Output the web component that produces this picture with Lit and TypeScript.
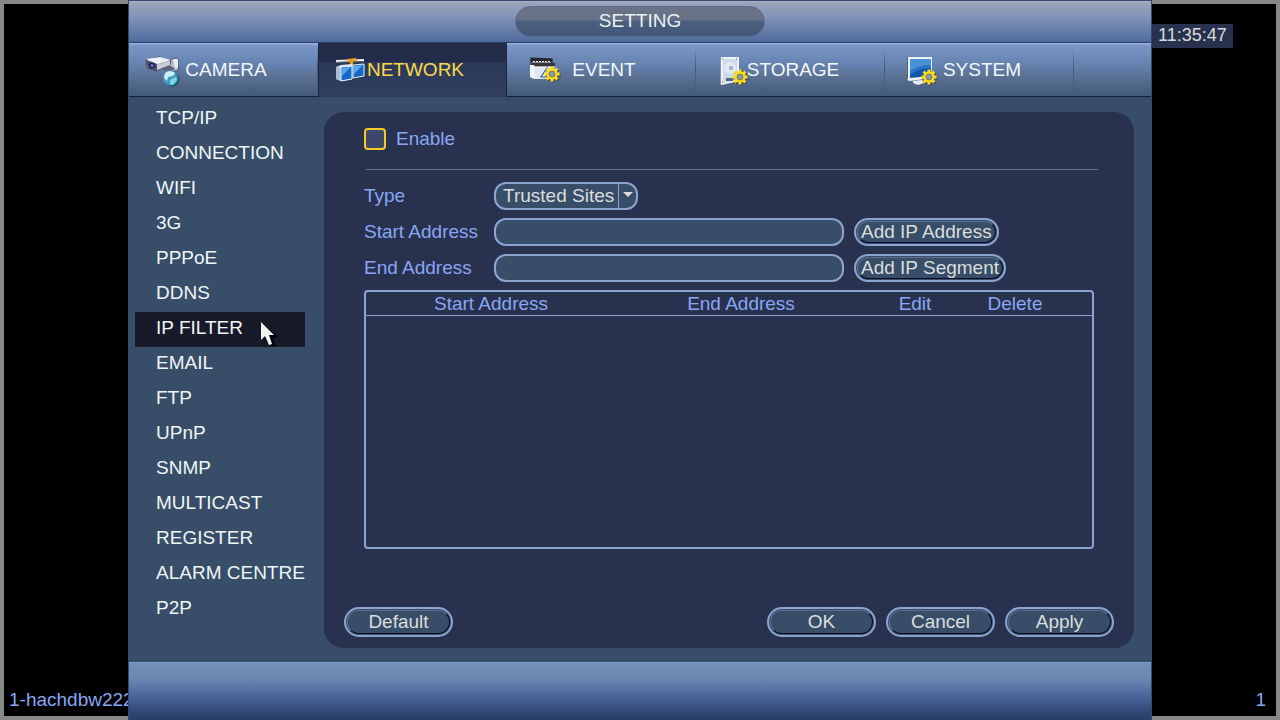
import { LitElement, html, svg, css } from "lit";
import { customElement, state } from "lit/decorators.js";
import { classMap } from "lit/directives/class-map.js";

const TEETH = "M0 -7.6V-3.6M0 7.6V3.6M-7.6 0H-3.6M7.6 0H3.6M-5.4 -5.4L-3 -3M5.4 5.4L3 3M-5.4 5.4L-3 3M5.4 -5.4L3 -3";

const gear = (x: number, y: number) => svg`
  <g transform="translate(${x} ${y})">
    <path d=${TEETH} transform="translate(1 1)" stroke="#2f3540" stroke-width="3.4" opacity=".6"/>
    <path d=${TEETH} stroke="#f8dc22" stroke-width="2.9"/>
    <circle r="4.300" stroke="#f8dc22" stroke-width="2.800"/>
    <circle r="3" fill="#7f9ac0" stroke="#8f7418" stroke-width=".8"/>
  </g>`;

const icons: Record<string, unknown> = {
  CAMERA: svg`
    <path d="M23 6l4-3h6v12h-6l-4-3z" fill="#b9bdcc" stroke="#3c4358" stroke-width=".8"/>
    <path d="M28 3h5v9h-3z" fill="#e9ecf4"/>
    <path d="M16 10l10 0l4 3l-5 2l-8-1z" fill="#5f6579"/>
    <path d="M1 4l13-3l12 4l-1 4l-14 6l-9-3z" fill="#a9aec0" stroke="#333a52" stroke-width=".8"/>
    <path d="M1 3l14-2l11 3l-14 4z" fill="#eef1f7"/>
    <path d="M12 9l13-4v4l-13 5z" fill="#c9cddb"/>
    <path d="M1 4l11 4v7l-9-3z" fill="#4a4d6c"/>
    <circle cx="7" cy="9.500" r="3" fill="#20204c"/><circle cx="7" cy="9.500" r="1.500" fill="#7777dc"/>
    <circle cx="27" cy="23" r="7.500" fill="#174f72"/>
    <circle cx="25.500" cy="22" r="7.500" fill="#3a9cc0"/>
    <path d="M20 17q5-4 10 0l-2 3l-5 1l-1 4l-3-3z" fill="#c9eef5"/>
    <path d="M25 24l6-3l1 3l-4 5l-3-1z" fill="#83d2e4"/>`,
  NETWORK: svg`
    <path d="M1 5l28-1" stroke="#f3f3ee" stroke-width="2"/>
    <path d="M1 6.500l28-1" stroke="#5c6678" stroke-width="1"/>
    <path d="M12 3l9-1l1 3l-9 1zM15 6h3v4h-3z" fill="#f0a21c"/>
    <path d="M1 11l5-2l11-1v15l-11 2l-5-2z" fill="#dce8f7"/>
    <path d="M1 11l5 1v13l-5-2z" fill="#a9bcd8"/>
    <path d="M6 11l11-1v13l-11 2z" fill="#1767c4" stroke="#eef6ff" stroke-width="1"/>
    <path d="M7 12l9-1l-9 9z" fill="#4fa4ee"/>
    <path d="M18 9l11-1v12l-11 2z" fill="#1767c4" stroke="#e3efff" stroke-width="1"/>
    <path d="M19 10l9-1l-9 9z" fill="#55a9f0"/>`,
  EVENT: svg`
    <path d="M8 2l21 1v9h-21z" fill="#8c8f92" stroke="#25272c" stroke-width="1.200"/>
    <path d="M8 2l21 1v3h-21z" fill="#25272c"/>
    <path d="M10 5.500h18" stroke="#eceeee" stroke-width="1" stroke-dasharray="2 1"/>
    <path d="M9 7l23 1v11h-23z" fill="#abafb2"/>
    <path d="M9 7l23 0v3h-23z" fill="#34363b"/>
    <path d="M7 9h4l1 2h20v12h-21l-4-2z" fill="#eff4fa"/>
    <path d="M12 12h20v11h-20z" fill="#dbe7f4"/>
    <path d="M18 21l6-9v9z" fill="#eef5fd" stroke="#3a5a86" stroke-width="1.200"/>
    ${gear(29, 18)}`,
  STORAGE: svg`
    <path d="M8 2l3-1h16v24l-16 4l-3-1z" fill="#8193ae"/>
    <path d="M9 1h18v24l-18 4z" fill="#eef3f9"/>
    <path d="M11 3h14v21l-14 3z" fill="#ced9ea"/>
    <circle cx="18" cy="12" r="6" fill="#e0e9f4"/><circle cx="19" cy="12" r="3" fill="#a6b5cb" stroke="#f6f8fc" stroke-width="1"/>
    <path d="M14 22h7v3h-7z" fill="#566780"/>
    <path d="M10 3h1M24 3h1M10 26h1" stroke="#4d5d75" stroke-width="1"/>
    ${gear(28, 21)}`,
  SYSTEM: svg`
    <path d="M6 1h25v21l-22 3l-3-1z" fill="#eef2f7"/>
    <path d="M6 1h1v23l-1-1z" fill="#53657f"/>
    <path d="M9 3h21v17l-21 2z" fill="#1257ae"/>
    <path d="M9 3h21v6q-12 0-21 7z" fill="#4a92d6"/>
    <path d="M9 15q9-6 21-6v3q-12 0-21 7z" fill="#2b74c6"/>
    <path d="M12 25l9-1l2 3l-6 2l-5-2z" fill="#e7edf4"/>
    ${gear(28, 21)}`,
};

const TABS = Object.keys(icons);
const PAGES = [
  "TCP/IP", "CONNECTION", "WIFI", "3G", "PPPoE", "DDNS", "IP FILTER", "EMAIL",
  "FTP", "UPnP", "SNMP", "MULTICAST", "REGISTER", "ALARM CENTRE", "P2P",
];

@customElement("app-root")
export class AppRoot extends LitElement {
  @state() private tab = "NETWORK";
  @state() private page = "IP FILTER";

  static styles = css`
    :host {
      display: grid;
      grid-template-columns: 1fr 8fr 1fr;
      box-sizing: border-box;
      min-height: 100vh;
      background: #000;
      color: #8aa6f4;
      font: 19px/22px "Liberation Sans", Arial, sans-serif;
    }
    * { box-sizing: border-box; }
    button, select, input { font: inherit; color: inherit; margin: 0; }
    .pane {
      min-width: 0;
      display: flex;
      flex-direction: column;
      border: 4px solid #858a85;
      white-space: nowrap;
      overflow: hidden;
    }
    .left { border-right: 0; justify-content: flex-end; padding: 0 0 5px 5px; }
    .right { border-left: 0; justify-content: space-between; padding: 20px 0 5px; }
    .clock {
      align-self: flex-start;
      padding: 0 6px 2px;
      background: #28324e;
      color: #d8dcdc;
      font-size: 18px;
    }
    .channel { align-self: flex-end; padding-right: 10px; }
    .dialog {
      min-width: 0;
      display: flex;
      flex-direction: column;
      background: #384d68;
      border: 1px solid #34496e;
      border-bottom: 0;
    }
    .titlebar {
      display: flex;
      justify-content: center;
      padding: 4px 0 5px;
      border-top: 1px solid #a3b0c8;
      border-bottom: 1px solid #2b3f68;
      background: linear-gradient(#9aa5b8, #8395b8 35%, #4f6b9c);
    }
    h1 {
      margin: 0;
      width: 250px;
      border-radius: 16px;
      border: 1px solid #586a86;
      padding-bottom: 2px;
      background: linear-gradient(#6a7488, #667187 46%, #4d5f7e 47%, #40567a);
      color: #e8f2f2;
      font: inherit;
      line-height: 27px;
      text-align: center;
    }
    .tabs {
      display: flex;
      height: 54px;
      border-bottom: 1px solid #15213c;
      background: linear-gradient(#9bb2de 1px, #7c97c6 2px, #6582b0 40%, #5a7092 65%, #43597a);
    }
    .tab {
      flex: 0 1 189px;
      display: grid;
      align-items: center;
      padding: 0;
      border: 0;
      background: none;
      color: #f2f8f8;
      border-right: 1px solid;
      border-image: linear-gradient(transparent 10%, #3f557c 50%, transparent 90%) 1;
    }
    .tab.on {
      margin-bottom: -1px;
      border-image: none;
      border: solid #1a2440;
      border-width: 0 1px;
      background: linear-gradient(#232c48, #222c4a 35%, #2c3856 36%, #303e5e);
      color: #fbdb4a;
    }
    .tab svg { grid-area: 1 / 1; justify-self: start; margin: 4px 0 0 16px; }
    .tab span { grid-area: 1 / 1; justify-self: center; padding-left: 6px; }
    .body { flex: 1; display: flex; gap: 19px; padding: 5px 17px 14px 6px; }
    nav { flex: 0 0 170px; }
    nav a {
      display: block;
      position: relative;
      padding: 0 0 4px 21px;
      line-height: 31px;
      color: #eef6f6;
      text-decoration: none;
      white-space: nowrap;
    }
    nav a.on { background: #171b29; }
    .pointer { position: absolute; left: 125px; top: 9px; }
    .panel {
      flex: 1;
      min-width: 0;
      margin-top: 10px;
      display: flex;
      flex-direction: column;
      padding: 16px 20px 11px;
      border-radius: 20px;
      background: #28324e;
    }
    .form { flex: 1; display: flex; flex-direction: column; padding: 0 20px; }
    .enable { display: flex; align-items: center; gap: 10px; }
    .enable input {
      appearance: none;
      width: 22px;
      height: 22px;
      border: 2px solid #f6c92a;
      border-radius: 4px;
      background: #3b476b;
    }
    hr {
      align-self: stretch;
      margin: 19px -4px 12px 2px;
      border: 0;
      border-top: 1px solid #5f7590;
    }
    .rows { display: flex; flex-direction: column; gap: 8px; }
    .row { display: flex; gap: 10px; }
    .row label { flex: 0 0 120px; line-height: 28px; }
    .text, select {
      height: 28px;
      padding: 0 7px;
      border: 2px solid #8ca4d2;
      border-radius: 12px;
      background: #384d68;
      outline: 0;
      color: #dadedc;
    }
    .text { flex: 0 1 350px; min-width: 0; }
    .pick { position: relative; display: flex; width: 144px; }
    select { appearance: none; width: 100%; }
    .pick svg { position: absolute; right: 0; top: 0; pointer-events: none; }
    .btn {
      position: relative;
      height: 28px;
      padding: 0 5px 1px;
      border: 2px solid #8ca4d2;
      border-radius: 14px;
      background: #384d68;
      color: #dadedc;
      line-height: 22px;
      white-space: nowrap;
    }
    .btn::before {
      content: "";
      position: absolute;
      inset: 1px;
      border: 1px solid;
      border-color: #5c6d8a #070b26 #070b26 #5c6d8a;
      border-radius: 12px;
    }
    .list {
      flex: 1;
      margin: 8px 0 58px;
      border: 2px solid #8ca4d2;
      border-radius: 4px;
    }
    table { width: 100%; table-layout: fixed; border-collapse: separate; border-spacing: 0; }
    th { height: 24px; padding: 0; font-weight: normal; border-bottom: 1px solid #8ca4d2; }
    .narrow { width: 98px; }
    .mid { width: 102px; }
    .gutter { width: 26px; }
    .actions { display: flex; gap: 10px; }
    .actions .btn { width: 109px; height: 30px; border-radius: 15px; }
    .actions .first { margin-right: auto; }
    footer {
      height: 58px;
      border-top: 1px solid #7f9cc8;
      background: linear-gradient(#7190ba, #6a87b2 28%, #4a649a 58%, #2a406c 95%);
    }
  `;

  render() {
    return html`
      <div class="pane left"><span>1-hachdbw222</span></div>
      <main class="dialog">
        <header class="titlebar"><h1>SETTING</h1></header>
        <div class="tabs">
          ${TABS.map((t) => html`
            <button class=${classMap({ tab: true, on: t === this.tab })} @click=${() => (this.tab = t)}>
              <svg width="40" height="32" viewBox="0 0 40 32" fill="none" aria-hidden="true">${icons[t]}</svg>
              <span>${t}</span>
            </button>`)}
        </div>
        <div class="body">
          <nav>
            ${PAGES.map((p) => html`<a
              href="#"
              class=${classMap({ on: p === this.page })}
              @click=${(e: Event) => { e.preventDefault(); this.page = p; }}
            >${p}${p === this.page ? this.pointer() : ""}</a>`)}
          </nav>
          <section class="panel">
            <div class="form">
              <div class="enable">
                <input type="checkbox" id="enable" />
                <label for="enable">Enable</label>
              </div>
              <hr />
              <div class="rows">
                <div class="row">
                  <label for="type">Type</label>
                  <div class="pick">
                    <select id="type"><option>Trusted Sites</option><option>Blocked Sites</option></select>
                    <svg width="20" height="28" viewBox="0 0 20 28" aria-hidden="true">
                      <path d="M.5 2V26" stroke="#8ca4d2" />
                      <path d="M5 10H15L10 15Z" fill="#dadedc" />
                    </svg>
                  </div>
                </div>
                <div class="row">
                  <label for="start">Start Address</label>
                  <input class="text" id="start" type="text" />
                  <button class="btn">Add IP Address</button>
                </div>
                <div class="row">
                  <label for="end">End Address</label>
                  <input class="text" id="end" type="text" />
                  <button class="btn">Add IP Segment</button>
                </div>
              </div>
              <div class="list">
                <table>
                  <thead>
                    <tr>
                      <th>Start Address</th>
                      <th>End Address</th>
                      <th class="narrow">Edit</th>
                      <th class="mid">Delete</th>
                      <th class="gutter"></th>
                    </tr>
                  </thead>
                </table>
              </div>
            </div>
            <div class="actions">
              <button class="btn first">Default</button>
              <button class="btn">OK</button>
              <button class="btn">Cancel</button>
              <button class="btn">Apply</button>
            </div>
          </section>
        </div>
        <footer></footer>
      </main>
      <div class="pane right">
        <time class="clock">11:35:47</time>
        <span class="channel">1</span>
      </div>
    `;
  }

  private pointer() {
    return html`<svg class="pointer" width="20" height="28" viewBox="0 0 20 28" aria-hidden="true">
      <path d="M3 2L18 16L13 17L16 25L12 26L9 20L6 22Z" fill="#05070c" />
      <path d="M1 1V19L5 15L9 24L12 23L9 14H14Z" fill="#f4f6f4" />
    </svg>`;
  }
}
